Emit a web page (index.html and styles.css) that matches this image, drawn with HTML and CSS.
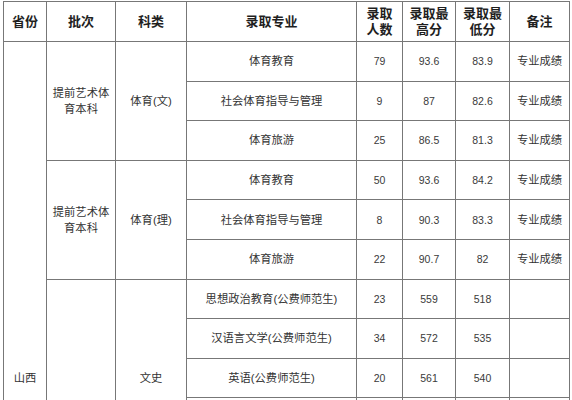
FILE: index.html
```html
<!DOCTYPE html>
<html lang="zh-CN">
<head>
<meta charset="utf-8">
<title>山西录取分数</title>
<link rel="stylesheet" href="styles.css">
</head>
<body>
<table class="score-table">
  <colgroup>
    <col class="c-prov">
    <col class="c-batch">
    <col class="c-type">
    <col class="c-major">
    <col class="c-num">
    <col class="c-high">
    <col class="c-low">
    <col class="c-note">
  </colgroup>
  <thead>
    <tr class="head">
      <th>省份</th>
      <th>批次</th>
      <th>科类</th>
      <th>录取专业</th>
      <th>录取<br>人数</th>
      <th>录取最<br>高分</th>
      <th>录取最<br>低分</th>
      <th>备注</th>
    </tr>
  </thead>
  <tbody>
    <tr>
      <td class="prov" rowspan="17">山西</td>
      <td rowspan="3">提前艺术体<br>育本科</td>
      <td rowspan="3">体育(文)</td>
      <td>体育教育</td><td class="n">79</td><td class="n">93.6</td><td class="n">83.9</td><td>专业成绩</td>
    </tr>
    <tr><td>社会体育指导与管理</td><td class="n">9</td><td class="n">87</td><td class="n">82.6</td><td>专业成绩</td></tr>
    <tr><td>体育旅游</td><td class="n">25</td><td class="n">86.5</td><td class="n">81.3</td><td>专业成绩</td></tr>
    <tr>
      <td rowspan="3">提前艺术体<br>育本科</td>
      <td rowspan="3">体育(理)</td>
      <td>体育教育</td><td class="n">50</td><td class="n">93.6</td><td class="n">84.2</td><td>专业成绩</td>
    </tr>
    <tr><td>社会体育指导与管理</td><td class="n">8</td><td class="n">90.3</td><td class="n">83.3</td><td>专业成绩</td></tr>
    <tr><td>体育旅游</td><td class="n">22</td><td class="n">90.7</td><td class="n">82</td><td>专业成绩</td></tr>
    <tr>
      <td rowspan="11"></td>
      <td rowspan="5">文史</td>
      <td>思想政治教育(公费师范生)</td><td class="n">23</td><td class="n">559</td><td class="n">518</td><td></td>
    </tr>
    <tr><td>汉语言文学(公费师范生)</td><td class="n">34</td><td class="n">572</td><td class="n">535</td><td></td></tr>
    <tr><td>英语(公费师范生)</td><td class="n">20</td><td class="n">561</td><td class="n">540</td><td></td></tr>
    <tr><td></td><td></td><td></td><td></td><td></td></tr>
    <tr><td></td><td></td><td></td><td></td><td></td></tr>
    <tr><td rowspan="6"></td><td></td><td></td><td></td><td></td><td></td></tr>
    <tr><td></td><td></td><td></td><td></td><td></td></tr>
    <tr><td></td><td></td><td></td><td></td><td></td></tr>
    <tr><td></td><td></td><td></td><td></td><td></td></tr>
    <tr><td></td><td></td><td></td><td></td><td></td></tr>
    <tr><td></td><td></td><td></td><td></td><td></td></tr>
  </tbody>
</table>
</body>
</html>
```
FILE: styles.css
```css
html, body {
  margin: 0;
  padding: 0;
  background: #ffffff;
}

.score-table {
  border-collapse: collapse;
  table-layout: fixed;
  width: 566px;
  margin: 1px 0 0 3px;
  font-family: "Liberation Sans", "Noto Sans CJK SC", sans-serif;
  font-size: 11.3px;
  color: #333333;
}

.score-table th,
.score-table td {
  border: 1px solid #777777;
  padding: 0;
  text-align: center;
  vertical-align: middle;
  line-height: 16px;
}

.score-table th {
  font-family: "Liberation Sans", "Noto Sans CJK SC", sans-serif;
  font-weight: 700;
  font-size: 13px;
  line-height: 16px;
  color: #1f1f1f;
}

.score-table td.n {
  font-size: 10.5px;
  color: #3a3a3a;
}

.head {
  height: 40px;
}

.score-table tbody tr {
  height: 39.6px;
}

.c-prov { width: 43px; }
.c-batch { width: 69px; }
.c-type { width: 71px; }
.c-major { width: 170px; }
.c-num { width: 46px; }
.c-high { width: 53px; }
.c-low { width: 54px; }
.c-note { width: 60px; }
```
